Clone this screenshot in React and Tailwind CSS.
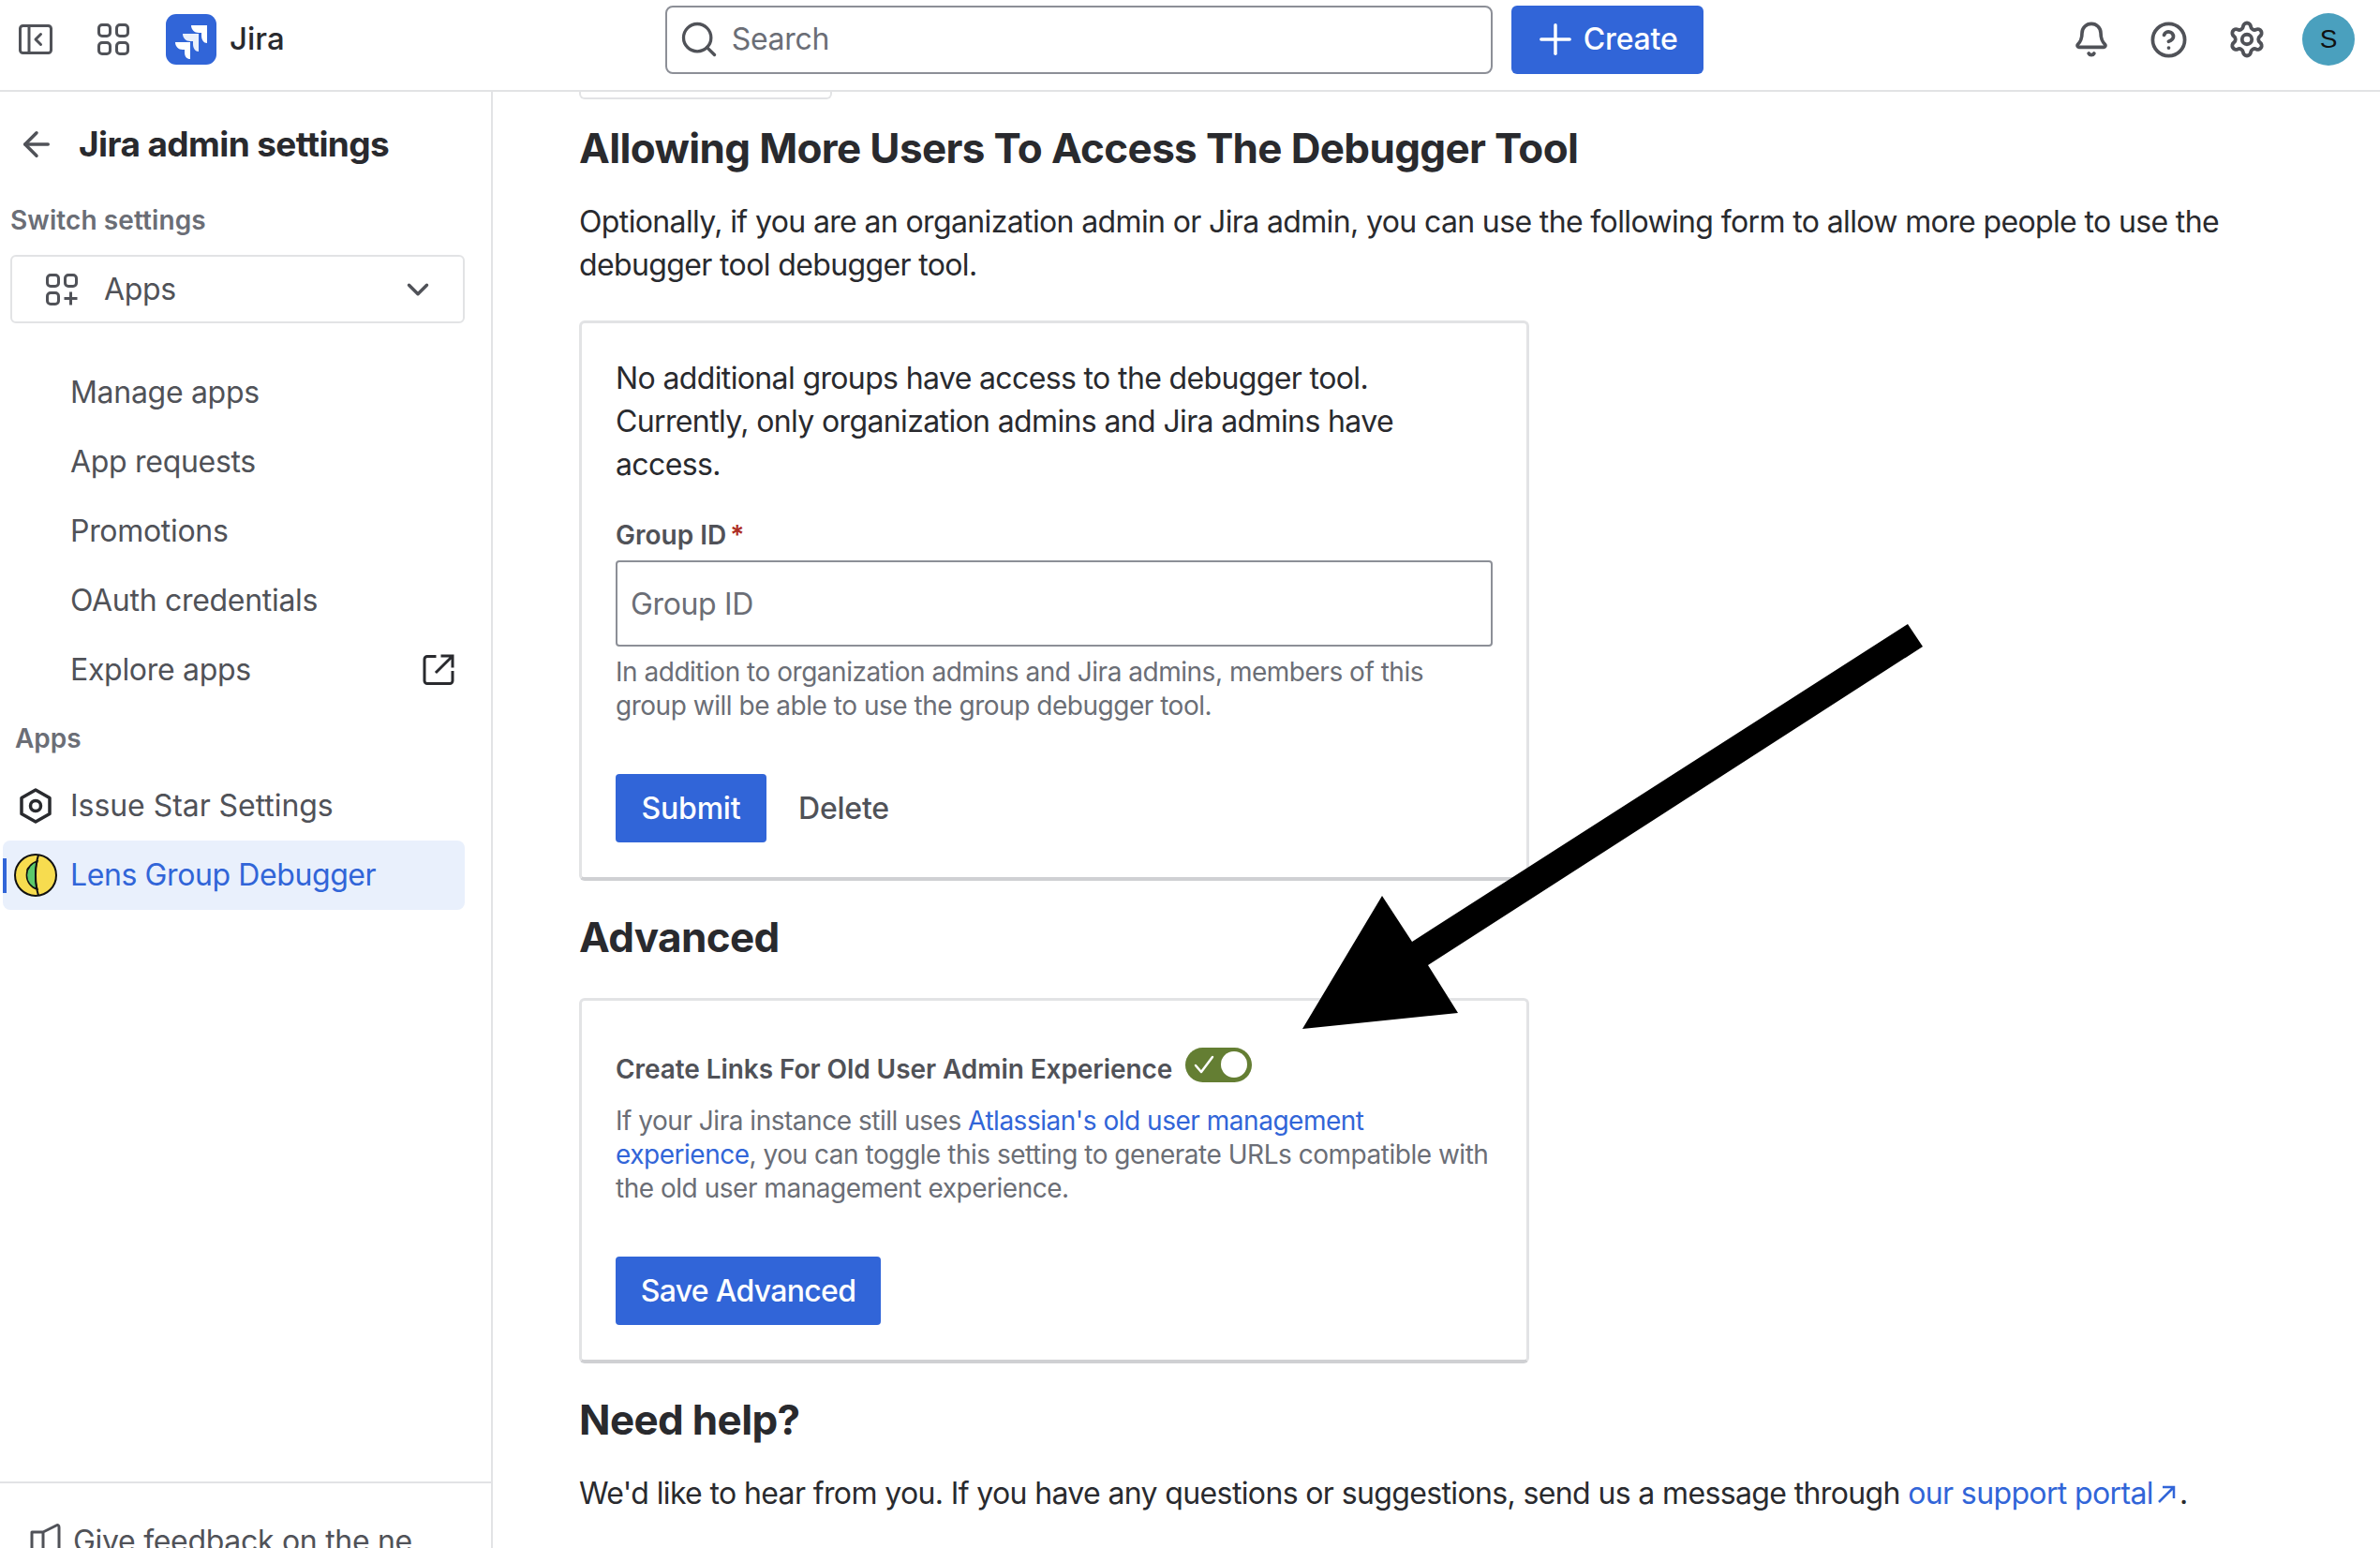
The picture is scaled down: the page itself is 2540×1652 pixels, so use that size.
import React from "react";
import { ArrowLeft, Bell, ChevronDown, CircleHelp, Plus, Search, Settings } from "lucide-react";

const PanelIcon = () => (
  <svg width="36" height="32" viewBox="0 0 36 32" fill="none" stroke="#505258" strokeWidth="3">
    <rect x="1.5" y="1.5" width="33" height="29" rx="3" />
    <path d="M11 2v28M23.5 10.5 18 16l5.500 5.500" strokeLinecap="round" strokeLinejoin="round" />
  </svg>
);

const GridIcon = () => (
  <svg width="34" height="34" viewBox="0 0 34 34" fill="none" stroke="#505258" strokeWidth="3">
    <rect x="1.500" y="1.500" width="12" height="12" rx="3.500" />
    <rect x="20.500" y="1.500" width="12" height="12" rx="3.500" />
    <rect x="1.500" y="20.500" width="12" height="12" rx="3.500" />
    <rect x="20.500" y="20.500" width="12" height="12" rx="3.500" />
  </svg>
);

const AppsIcon = () => (
  <svg width="34" height="34" viewBox="0 0 34 34" fill="none" stroke="#505258" strokeWidth="3">
    <rect x="1.500" y="1.500" width="12" height="12" rx="3.500" />
    <rect x="20.500" y="1.500" width="12" height="12" rx="3.500" />
    <rect x="1.500" y="20.500" width="12" height="12" rx="3.500" />
    <path d="M26.500 19.500v14M19.500 26.500h14" />
  </svg>
);

const JiraLogo = () => (
  <svg width="54" height="54" viewBox="0 0 54 54">
    <rect width="54" height="54" rx="11" fill="#3165D8" />
    <path d="M44 12H27c0 4.500 3.500 8 8 8h3v3c0 4.500 2.500 8 6 8z" fill="#fff" />
    <path d="M35 21H18c0 4.500 3.500 8 8 8h3v3c0 4.500 2.500 8 6 8z" fill="#fff" opacity="0.9" />
    <path d="M26 30H10c0 4.500 3.500 8 8 8h2v3c0 4.500 2.500 7 6 7z" fill="#fff" />
  </svg>
);

const ExternalIcon = () => (
  <svg width="34" height="34" viewBox="0 0 34 34" fill="none" stroke="#292A2E" strokeWidth="3" strokeLinecap="square">
    <path d="M13 2.500H5a3 3 0 0 0-3 3v23a3 3 0 0 0 3 3h24a3 3 0 0 0 3-3v-9" />
    <path d="M21 2h11v11M31 3 15 19" />
  </svg>
);

const HexIcon = () => (
  <svg width="34" height="38" viewBox="0 0 34 38" fill="none" stroke="#292A2E" strokeWidth="3.500">
    <path d="M17 2 32 10.500v17L17 36 2 27.500v-17z" strokeLinejoin="round" />
    <circle cx="17" cy="19" r="5.500" />
  </svg>
);

const LensIcon = () => (
  <svg width="46" height="46" viewBox="0 0 46 46">
    <circle cx="23" cy="23" r="22" fill="#F7DC4F" stroke="#111" strokeWidth="2" />
    <path d="M25 8a15.500 15.500 0 0 0 0 30C22 30 22 16 25 8z" fill="#5CC96B" stroke="#111" strokeWidth="1.500" />
    <path d="M26 1.500C22 14 22 32 26 44.500" fill="none" stroke="#111" strokeWidth="2" />
    <path d="M14 18c0-2 1-3 3-4" fill="none" stroke="#111" strokeWidth="1.500" />
  </svg>
);

const FeedbackIcon = () => (
  <svg width="34" height="34" viewBox="0 0 34 34" fill="none" stroke="#505258" strokeWidth="3">
    <path d="M2 10h12l14-7c2-1 3 0 3 2v24H2zM14 10v19" strokeLinejoin="round" />
  </svg>
);

const NavItem = ({ label, children }) => (
  <div className="flex h-[74px] items-center justify-between pl-[75px] pr-[39px] text-[32px] tracking-[-0.3px] text-[#505258]">
    <span>{label}</span>
    {children}
  </div>
);

const Sidebar = () => (
  <aside className="relative flex w-[526px] shrink-0 flex-col overflow-hidden border-r-2 border-[#E2E3E5]">
    <div className="flex h-[112px] shrink-0 items-center gap-[22px] pl-[18px]">
      <ArrowLeft size={42} strokeWidth={2} color="#505258" />
      <span className="ml-[2px] text-[37px] font-bold tracking-[-0.6px] text-[#292A2E]">Jira admin settings</span>
    </div>
    <div className="mt-[3px] pl-[11px] text-[28px] font-semibold leading-[44px] tracking-[0.1px] text-[#6B6E76]">Switch settings</div>
    <div className="ml-[11px] mr-[28px] mt-[15px] flex h-[73px] shrink-0 items-center justify-between rounded-[6px] border-2 border-[#E2E3E5] pl-[36px] pr-[29px]">
      <div className="flex items-center gap-[28px] text-[32px] tracking-[-0.3px] text-[#505258]">
        <AppsIcon />
        Apps
      </div>
      <ChevronDown size={38} strokeWidth={2.2} color="#505258" />
    </div>
    <div className="mt-[37px] flex flex-col">
      <NavItem label="Manage apps" />
      <NavItem label="App requests" />
      <NavItem label="Promotions" />
      <NavItem label="OAuth credentials" />
      <NavItem label="Explore apps">
        <ExternalIcon />
      </NavItem>
    </div>
    <div className="flex h-[71px] items-center pl-[16px] text-[28px] font-semibold text-[#6B6E76]">Apps</div>
    <div className="flex h-[74px] items-center pl-[21px] text-[32px] tracking-[-0.05px] text-[#505258]">
      <HexIcon />
      <span className="ml-[20px]">Issue Star Settings</span>
    </div>
    <div className="relative ml-[3px] mr-[28px] flex h-[74px] items-center rounded-[8px] bg-[#E9F0FC] pl-[12px] text-[32px] tracking-[-0.4px] text-[#3165D8]">
      <span className="absolute left-0 top-[19px] h-[37px] w-[4px] bg-[#3165D8]" />
      <LensIcon />
      <span className="ml-[14px]">Lens Group Debugger</span>
    </div>
    <div className="mt-auto flex h-[71px] shrink-0 items-start gap-[12px] overflow-hidden border-t-2 border-[#E2E3E5] pl-[32px] pt-[42px] text-[32px] leading-[40px] tracking-[-0.3px] text-[#505258]">
      <FeedbackIcon />
      <span className="whitespace-nowrap">Give feedback on the ne</span>
    </div>
  </aside>
);

const Header = () => (
  <header className="flex h-[98px] shrink-0 items-center border-b-2 border-[#E2E3E5] bg-white pb-[12px]">
    <div className="ml-[20px] flex items-center">
      <PanelIcon />
      <span className="ml-[48px] flex">
        <GridIcon />
      </span>
      <span className="ml-[39px] flex">
        <JiraLogo />
      </span>
      <span className="ml-[14px] text-[33px] font-medium text-[#292A2E]">Jira</span>
    </div>
    <div className="ml-[406px] flex h-[73px] w-[883px] items-center gap-[13px] rounded-[8px] border-2 border-[#8C8F97] pl-[12px]">
      <Search size={44} strokeWidth={1.8} color="#505258" />
      <input placeholder="Search" className="min-w-0 flex-1 bg-transparent text-[32px] tracking-[-0.3px] outline-none placeholder:text-[#6B6E76]" />
    </div>
    <button className="ml-[20px] flex h-[73px] w-[205px] items-center justify-center gap-[4px] rounded-[6px] bg-[#3165D8] pr-[6px] text-[32px] font-medium tracking-[-0.2px] text-white">
      <Plus size={52} strokeWidth={1.6} />
      Create
    </button>
    <div className="ml-auto mr-[27px] flex items-center">
      <Bell size={40} strokeWidth={2.2} color="#505258" />
      <CircleHelp size={41} strokeWidth={2.2} color="#505258" className="ml-[42px]" />
      <Settings size={42} strokeWidth={2.2} color="#505258" className="ml-[42px]" />
      <div className="ml-[38px] flex h-[56px] w-[56px] items-center justify-center rounded-full bg-[#4AA0BE] font-['Liberation_Sans',sans-serif] text-[28px] text-[#111]">S</div>
    </div>
  </header>
);

const Toggle = () => (
  <span className="ml-[14px] flex h-[37px] w-[71px] -translate-y-[5px] items-center justify-between rounded-full bg-[#647E33] pl-[8px] pr-[5px]">
    <svg width="24" height="24" viewBox="0 0 24 24" fill="none" stroke="#fff" strokeWidth="2.500" strokeLinecap="round" strokeLinejoin="round">
      <path d="M3 13l6 7L21 4" />
    </svg>
    <span className="h-[28px] w-[28px] rounded-full bg-white" />
  </span>
);

const Arrow = () => (
  <svg className="pointer-events-none absolute left-0 top-0" width="2540" height="1652" viewBox="0 0 2540 1652">
    <polygon points="2036,666 2052,690 1524,1030 1556,1081 1390,1098 1475,956 1507,1005" fill="#000" />
  </svg>
);

export default function App() {
  return (
    <div className="relative flex h-[1652px] w-[2540px] flex-col overflow-hidden bg-white font-[Inter,sans-serif] text-[#292A2E]">
      <Header />
      <div className="flex min-h-0 flex-1">
        <Sidebar />
        <main className="flex-1 pl-[92px]">
          <div className="h-[8px] w-[270px] rounded-b-[6px] border-x-2 border-b-2 border-[#E2E3E5]" />
          <h2 className="mt-[25px] text-[44px] font-bold leading-[54px] tracking-[-0.65px]">Allowing More Users To Access The Debugger Tool</h2>
          <p className="mt-[29px] w-[1780px] text-[32px] leading-[46px] tracking-[-0.63px]">
            Optionally, if you are an organization admin or Jira admin, you can use the following form to allow more people to use the debugger tool debugger tool.
          </p>
          <section className="mt-[36px] h-[598px] w-[1014px] rounded-[6px] border-[3px] border-b-4 border-[#E2E3E5] border-b-[#CFD0D3] px-[36px] pt-[36px]">
            <p className="text-[32px] leading-[46px] tracking-[-0.63px]">
              No additional groups have access to the debugger tool. Currently, only organization admins and Jira admins have access.
            </p>
            <div className="mt-[34px] text-[28px] font-semibold leading-[36px] text-[#505258]">
              Group ID<span className="ml-[4px] text-[#AE2E24]">*</span>
            </div>
            <input
              placeholder="Group ID"
              className="mt-[9px] h-[92px] w-full rounded-[4px] border-2 border-[#8C8F97] px-[14px] text-[32px] tracking-[-0.35px] outline-none placeholder:text-[#6B6E76]"
            />
            <p className="mt-[9px] text-[28px] leading-[36px] tracking-[-0.48px] text-[#6B6E76]">
              In addition to organization admins and Jira admins, members of this group will be able to use the group debugger tool.
            </p>
            <div className="mt-[55px] flex items-center">
              <button className="h-[73px] w-[161px] rounded-[4px] bg-[#3165D8] text-[32px] font-medium tracking-[-0.2px] text-white">Submit</button>
              <span className="ml-[34px] text-[32px] font-medium tracking-[-0.2px] text-[#505258]">Delete</span>
            </div>
          </section>
          <h2 className="mt-[33px] text-[44px] font-bold leading-[54px] tracking-[-0.65px]">Advanced</h2>
          <section className="mt-[38px] h-[390px] w-[1014px] rounded-[6px] border-[3px] border-b-4 border-[#E2E3E5] border-b-[#CFD0D3] px-[36px] pt-[53px]">
            <div className="flex h-[40px] items-center text-[28px] font-semibold tracking-[-0.07px] text-[#505258]">
              Create Links For Old User Admin Experience
              <Toggle />
            </div>
            <p className="mt-[17px] text-[28px] leading-[36px] tracking-[-0.48px] text-[#6B6E76]">
              If your Jira instance still uses <span className="text-[#3165D8]">Atlassian's old user management experience</span>, you can toggle this setting to generate URLs compatible with the old user management experience.
            </p>
            <button className="mt-[55px] h-[73px] w-[283px] rounded-[4px] bg-[#3165D8] text-[32px] font-medium tracking-[-0.7px] text-white">Save Advanced</button>
          </section>
          <h2 className="mt-[33px] text-[44px] font-bold leading-[54px] tracking-[-0.65px]">Need help?</h2>
          <p className="mt-[29px] whitespace-nowrap text-[32px] leading-[46px] tracking-[-0.63px]">
            We'd like to hear from you. If you have any questions or suggestions, send us a message through{" "}
            <span className="text-[#3165D8]">our support portal</span>
            <svg className="mx-[3px] inline-block align-[-1px]" width="22" height="22" viewBox="0 0 22 22" fill="none" stroke="#3165D8" strokeWidth="2.500">
              <path d="M3 19 19 3M7 3h12v12" />
            </svg>
            .
          </p>
        </main>
      </div>
      <Arrow />
    </div>
  );
}
